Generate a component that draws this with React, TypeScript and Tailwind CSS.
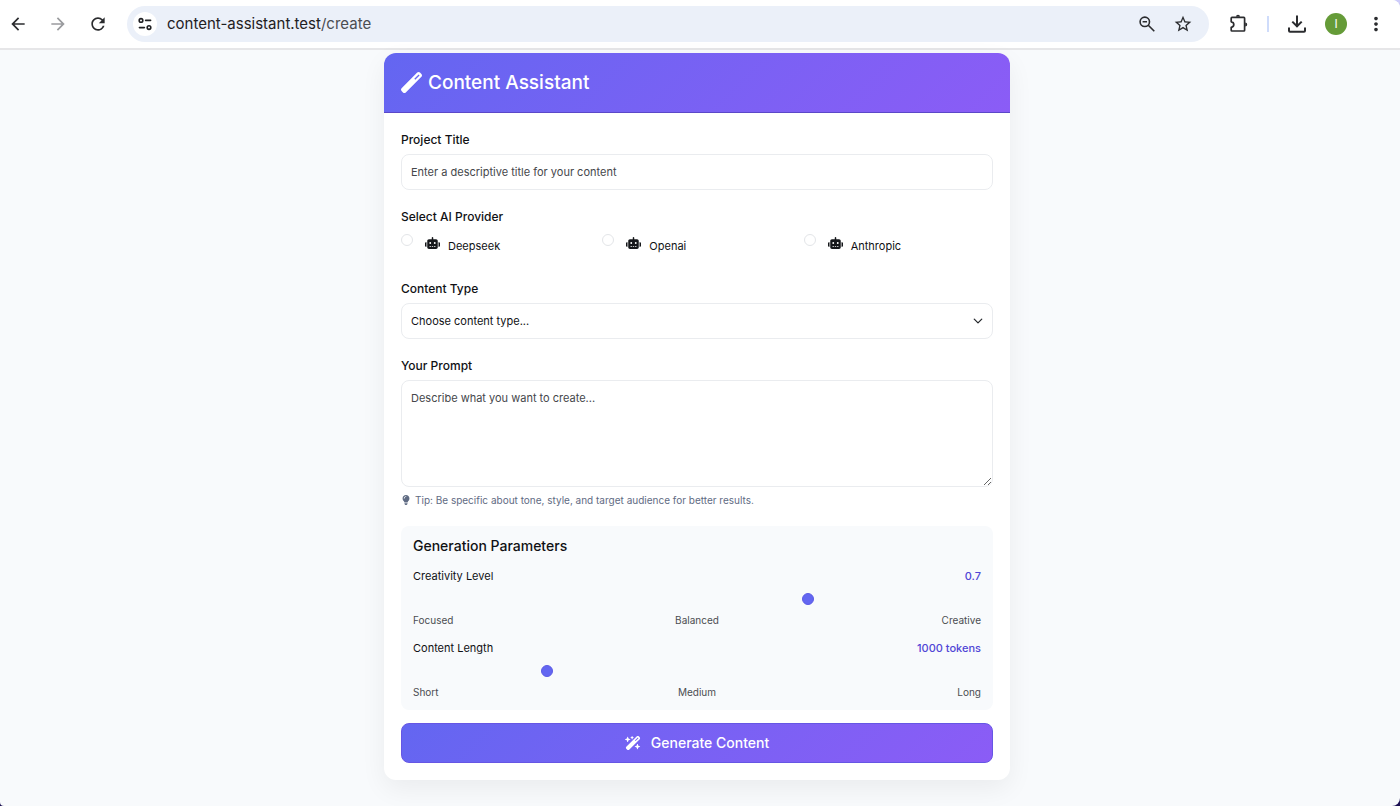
import { useState } from "react";
import type { ReactNode } from "react";
import { FaLightbulb, FaRobot, FaWandMagic, FaWandMagicSparkles } from "react-icons/fa6";
import { MdArrowBack, MdArrowForward, MdMoreVert, MdRefresh, MdStarBorder } from "react-icons/md";

const iconButton = "flex size-8 items-center justify-center rounded-full";

function TuneIcon() {
  return (
    <svg viewBox="0 0 16 16" className="size-4" fill="none" stroke="#1f2023" strokeWidth="1.6" strokeLinecap="round">
      <circle cx="4" cy="4.400" r="1.800" />
      <path d="M8.600 4.400h5" />
      <circle cx="12" cy="11.600" r="1.800" />
      <path d="M2.400 11.600h5" />
    </svg>
  );
}

function ZoomOutIcon() {
  return (
    <svg viewBox="0 0 18 18" className="size-[18px]" fill="none" stroke="#2b2c2f" strokeWidth="1.6">
      <circle cx="6.8" cy="6.8" r="4.7" />
      <path d="M4.6 6.8h4.4M10.3 10.3l6 6" />
    </svg>
  );
}

function PuzzleIcon() {
  return (
    <svg viewBox="0 0 20 20" className="size-5" fill="none" stroke="#2b2c2f" strokeWidth="1.7" strokeLinejoin="round">
      <path d="M3 3.400h11.800q.8 0 .8.8v12q0 .8-.8.8H3q-.8 0-.8-.8v-2.900c1.700-.2 2.600-1.200 2.600-2.700s-.9-2.600-2.600-2.800V4.200q0-.8.8-.8z" />
      <path d="M7 2.800a2 2 0 0 1 4 0zM16.200 8.400a2 2 0 0 1 0 4z" fill="#2b2c2f" stroke="none" />
    </svg>
  );
}

function DownloadIcon() {
  return (
    <svg viewBox="0 0 20 20" className="size-5" fill="none" stroke="#2b2c2f" strokeWidth="2">
      <path d="M10 1.500v10.500M5.300 7.600l4.700 4.700 4.700-4.700" />
      <path d="M2 13.500v3.200q0 1 1 1h14q1 0 1-1v-3.200" />
    </svg>
  );
}

function BrowserBar() {
  return (
    <header className="flex h-[50px] items-center border-b-2 border-[#e6e6e8] bg-white pr-2 text-[#2b2c2f]">
      <nav className="flex gap-2 pl-0.5">
        <button type="button" aria-label="Back" className={iconButton}><MdArrowBack className="size-5" /></button>
        <button type="button" aria-label="Forward" className={`${iconButton} text-[#9a9b9e]`}><MdArrowForward className="size-5" /></button>
        <button type="button" aria-label="Reload" className={iconButton}><MdRefresh className="size-5" /></button>
      </nav>
      <div className="ml-[13px] flex h-9 flex-1 items-center rounded-full bg-[#ebf0f9] pr-2.5 pl-1.5">
        <button type="button" aria-label="Site settings" className="flex size-6 items-center justify-center rounded-full bg-white">
          <TuneIcon />
        </button>
        <p className="ml-2.5 flex-1 text-[15px] text-[#1f2023]">
          content-assistant.test<span className="text-[#4a4d52]">/create</span>
        </p>
        <button type="button" aria-label="Zoom out" className={iconButton}><ZoomOutIcon /></button>
        <button type="button" aria-label="Bookmark" className={`${iconButton} ml-1`}><MdStarBorder className="size-5" /></button>
      </div>
      <button type="button" aria-label="Extensions" className={`${iconButton} ml-3.5`}><PuzzleIcon /></button>
      <span className="mx-3 h-4 w-0.5 bg-[#cfdcfb]" />
      <button type="button" aria-label="Downloads" className={iconButton}><DownloadIcon /></button>
      <button type="button" aria-label="Profile" className="ml-3 flex size-[22px] items-center justify-center rounded-full bg-[#659b38] text-xs text-white">I</button>
      <button type="button" aria-label="Menu" className={`${iconButton} ml-[13px]`}><MdMoreVert className="size-[22px]" /></button>
    </header>
  );
}

const labelClass = "mb-[5px] block text-xs leading-[18px] font-medium text-[#101114]";
const fieldClass = "block w-full rounded-lg border border-[#eaecef] bg-white px-[9px] text-[11px] text-[#101114] outline-none placeholder:text-[#45474b]";

function Provider({ name }: { name: string }) {
  return (
    <label className="flex h-[31px] items-start pt-[3px]">
      <input
        type="radio"
        name="provider"
        value={name}
        className="size-3 appearance-none rounded-full border border-[#e3e5e8] bg-white checked:border-4 checked:border-[#6366f1]"
      />
      <FaRobot className="mt-0.5 ml-3 h-3.5 w-[15px] text-[#15171a]" />
      <span className="mt-[3px] ml-2 text-[11px] leading-[18px] text-[#101114]">{name}</span>
    </label>
  );
}

interface SliderProps {
  id: string;
  label: string;
  output: ReactNode;
  min: number;
  max: number;
  step: number;
  value: number;
  onChange: (value: number) => void;
  marks: string[];
}

function Slider({ id, label, output, min, max, step, value, onChange, marks }: SliderProps) {
  return (
    <div>
      <div className="flex justify-between leading-[18px]">
        <label htmlFor={id} className="text-[11px] text-[#101114]">{label}</label>
        <output htmlFor={id} className="text-[11px] font-medium text-[#5046d6]">{output}</output>
      </div>
      <input
        id={id}
        type="range"
        min={min}
        max={max}
        step={step}
        value={value}
        onChange={(e) => onChange(Number(e.target.value))}
        className="block h-[27px] w-full appearance-none bg-transparent [&::-webkit-slider-thumb]:size-3 [&::-webkit-slider-thumb]:appearance-none [&::-webkit-slider-thumb]:rounded-full [&::-webkit-slider-thumb]:border [&::-webkit-slider-thumb]:border-[#5c5be6] [&::-webkit-slider-thumb]:bg-[#6366f1]"
      />
      <div className="grid grid-cols-3 text-[10px] leading-4 text-[#4b4d51]">
        <span>{marks[0]}</span>
        <span className="text-center">{marks[1]}</span>
        <span className="text-right">{marks[2]}</span>
      </div>
    </div>
  );
}

export default function App() {
  const [creativity, setCreativity] = useState(0.7);
  const [tokens, setTokens] = useState(1000);

  return (
    <div className="bg-linear-to-b from-[#cfcdfb] to-[#1b0f52] font-['Inter',sans-serif]">
      <div className="flex min-h-screen flex-col overflow-hidden rounded-r-lg rounded-bl-sm bg-[#f8fafc]">
        <BrowserBar />
        <main className="flex-1 pt-[3px] pr-1.5 pb-6">
          <form className="mx-auto max-w-[626px] overflow-hidden rounded-xl bg-white shadow-[0_9px_26px_rgba(0,0,0,0.06)]">
            <div className="flex h-[60px] items-center gap-1.5 border-b border-[#5b48c8] bg-linear-135 from-[#6366f1] to-[#8b5cf6] px-[17px] text-white">
              <FaWandMagic className="size-[21px]" />
              <h1 className="text-[19px] leading-8 font-medium">Content Assistant</h1>
            </div>

            <div className="flex flex-col gap-[18px] px-[17px] pt-[18px] pb-[17px]">
              <div>
                <label htmlFor="title" className={labelClass}>Project Title</label>
                <input id="title" type="text" placeholder="Enter a descriptive title for your content" className={`${fieldClass} h-9`} />
              </div>

              <fieldset>
                <legend className={labelClass}>Select AI Provider</legend>
                <div className="grid grid-cols-3 gap-3">
                  <Provider name="Deepseek" />
                  <Provider name="Openai" />
                  <Provider name="Anthropic" />
                </div>
              </fieldset>

              <div>
                <label htmlFor="type" className={labelClass}>Content Type</label>
                <div className="relative">
                  <select id="type" className={`${fieldClass} h-9 appearance-none`}>
                    <option>Choose content type...</option>
                  </select>
                  <svg viewBox="0 0 16 16" className="pointer-events-none absolute top-[13px] right-2.5 size-2.5" fill="none" stroke="#25282c" strokeWidth="2" strokeLinecap="round" strokeLinejoin="round">
                    <path d="m2 5 6 6 6-6" />
                  </svg>
                </div>
              </div>

              <div>
                <label htmlFor="prompt" className={labelClass}>Your Prompt</label>
                <textarea id="prompt" placeholder="Describe what you want to create..." className={`${fieldClass} h-[107px] resize-y py-2 leading-[18px]`} />
                <p className="mt-[5px] flex items-center gap-1 text-[10px] leading-4 text-[#5f6b83]">
                  <FaLightbulb className="size-2.5" />
                  Tip: Be specific about tone, style, and target audience for better results.
                </p>
              </div>

              <div>
                <section className="mb-[13px] flex flex-col gap-[11px] rounded-lg bg-[#f8fafc] px-3 py-2.5">
                  <h2 className="text-sm leading-5 font-medium text-[#101114]">Generation Parameters</h2>
                  <Slider id="creativity" label="Creativity Level" output={creativity} min={0} max={1} step={0.1} value={creativity} onChange={setCreativity} marks={["Focused", "Balanced", "Creative"]} />
                  <Slider id="length" label="Content Length" output={`${tokens} tokens`} min={100} max={4000} step={100} value={tokens} onChange={setTokens} marks={["Short", "Medium", "Long"]} />
                </section>
                <button type="submit" className="flex h-10 w-full items-center justify-center gap-2.5 rounded-lg border border-[#6656e4] bg-linear-135 from-[#6366f1] to-[#8b5cf6] text-sm font-medium text-white">
                  <FaWandMagicSparkles className="size-4" />
                  Generate Content
                </button>
              </div>
            </div>
          </form>
        </main>
      </div>
    </div>
  );
}
